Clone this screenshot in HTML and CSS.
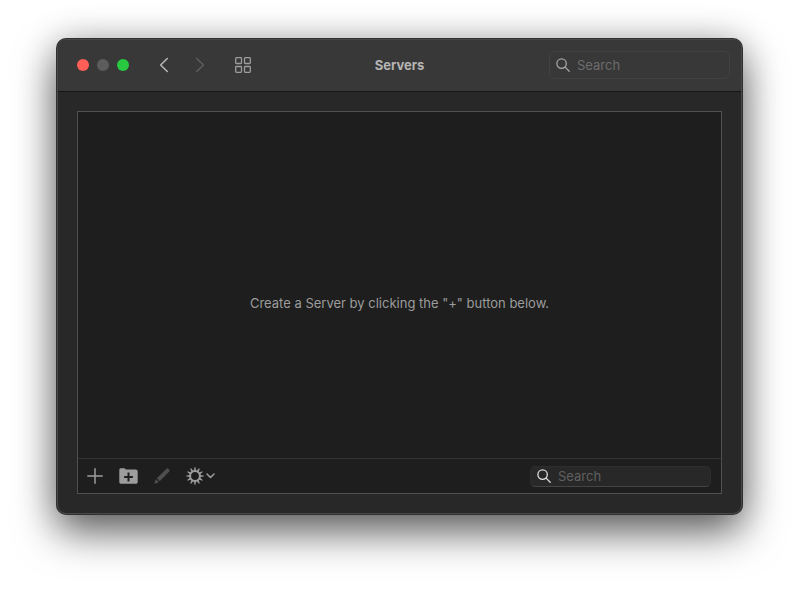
FILE: index.html
```
<!DOCTYPE html>
<html lang="en">
<head>
  <meta charset="UTF-8" />
  <meta name="viewport" content="width=device-width, initial-scale=1.0" />
  <title>Servers</title>
  <link rel="stylesheet" href="styles.css">
</head>
<body>
  <div class="window">
    <header class="titlebar">
      <div class="titlebar-left">
        <div class="lights">
          <button class="light light-close" aria-label="Close"></button>
          <button class="light light-minimize" aria-label="Minimize" disabled></button>
          <button class="light light-zoom" aria-label="Zoom"></button>
        </div>
        <div class="nav">
          <button class="icon-btn nav-btn" aria-label="Back">
            <svg width="10" height="16" viewBox="0 0 10 16"><path d="M8.3 1.5 1.6 8l6.7 6.5" /></svg>
          </button>
          <button class="icon-btn nav-btn" aria-label="Forward" disabled>
            <svg width="10" height="16" viewBox="0 0 10 16"><path d="M1.7 1.5 8.4 8l-6.7 6.5" /></svg>
          </button>
        </div>
        <button class="icon-btn grid-btn" aria-label="Show all">
          <svg width="16" height="16" viewBox="0 0 16 16">
            <rect x="0.7" y="0.7" width="5.8" height="5.8" rx="0.8" />
            <rect x="9.5" y="0.7" width="5.8" height="5.8" rx="0.8" />
            <rect x="0.7" y="9.5" width="5.8" height="5.8" rx="0.8" />
            <rect x="9.5" y="9.5" width="5.8" height="5.8" rx="0.8" />
          </svg>
        </button>
      </div>
      <h1 class="title">Servers</h1>
      <label class="search search-top">
        <svg width="14" height="14" viewBox="0 0 14 14"><circle cx="5.6" cy="5.6" r="4.7" /><path d="m9.1 9.1 4.1 4.1" /></svg>
        <input type="search" placeholder="Search" aria-label="Search preferences" />
      </label>
    </header>

    <main class="content">
      <section class="panel">
        <div class="empty">Create a Server by clicking the "+" button below.</div>

        <footer class="toolbar">
          <div class="actions">
            <button class="icon-btn" aria-label="Add server">
              <svg width="16" height="16" viewBox="0 0 16 16"><path d="M8 .8v14.4M.8 8h14.4" /></svg>
            </button>
            <button class="icon-btn" aria-label="Add folder">
              <svg width="19" height="16" viewBox="0 0 19 16">
                <path class="fill" d="M.3 2.2C.3.9.9.3 2.1.3h2.6c.9 0 1.3.3 1.7.8l.4.5h9.8c1.4 0 2.1.7 2.1 2.1v10c0 1.4-.7 2.1-2.1 2.1H2.4C1 15.8.3 15.1.3 13.7z" />
                <path class="cut" d="M9.5 4.6v8.8M5.1 9h8.8" />
              </svg>
            </button>
            <button class="icon-btn" aria-label="Edit" disabled>
              <svg width="16" height="16" viewBox="0 0 16 16">
                <path class="fill" d="M12.6.7c.6-.6 1.2-.6 1.7 0l1 1c.6.5.6 1.1 0 1.7L5.7 13.2 2.8 10.3zM2 11.2l2.8 2.8-3 1.5c-.9.4-1.6-.3-1.3-1.2z" />
              </svg>
            </button>
            <button class="icon-btn menu-btn" aria-label="More actions">
              <svg width="18" height="18" viewBox="0 0 18 18">
                <circle class="gear" cx="9" cy="9" r="4.9" />
                <g class="teeth">
                  <path id="tooth" d="M8.5.3h1l.6 4.2H7.9z" />
                  <use href="#tooth" transform="rotate(30 9 9)" />
                  <use href="#tooth" transform="rotate(60 9 9)" />
                  <use href="#tooth" transform="rotate(90 9 9)" />
                  <use href="#tooth" transform="rotate(120 9 9)" />
                  <use href="#tooth" transform="rotate(150 9 9)" />
                  <use href="#tooth" transform="rotate(180 9 9)" />
                  <use href="#tooth" transform="rotate(210 9 9)" />
                  <use href="#tooth" transform="rotate(240 9 9)" />
                  <use href="#tooth" transform="rotate(270 9 9)" />
                  <use href="#tooth" transform="rotate(300 9 9)" />
                  <use href="#tooth" transform="rotate(330 9 9)" />
                </g>
              </svg>
              <svg width="9" height="6" viewBox="0 0 9 6"><path d="m1 1 3.5 3.5L8 1" /></svg>
            </button>
          </div>
          <label class="search search-bottom">
            <svg width="14" height="14" viewBox="0 0 14 14"><circle cx="5.6" cy="5.6" r="4.7" /><path d="m9.1 9.1 4.1 4.1" /></svg>
            <input type="search" placeholder="Search" aria-label="Search servers" />
          </label>
        </footer>
      </section>
    </main>
  </div>
</body>
</html>
```
FILE: styles.css
```
* {
  box-sizing: border-box;
}
body {
  margin: 0;
  min-height: 100vh;
  padding: 39px 57px 75px;
  display: flex;
  background: white;
  font-family: Inter, "Liberation Sans", sans-serif;
  font-size: 13px;
  line-height: 16px;
}
.window {
  flex: 1;
  display: flex;
  flex-direction: column;
  border: 1px solid #484848;
  border-radius: 9px;
  background: #282828;
  overflow: hidden;
  box-shadow: 0 0 0 1px #303030, 0 18px 42px rgba(0, 0, 0, 0.6), 0 0 36px rgba(0, 0, 0, 0.2);
}

/* title bar */
.titlebar {
  display: grid;
  grid-template-columns: 1fr auto 1fr;
  align-items: center;
  height: 52px;
  padding: 0 11px 2px;
  background: #383838;
  border-bottom: 1px solid #161616;
}
.titlebar-left,
.lights,
.nav,
.actions,
.menu-btn {
  display: flex;
  align-items: center;
}
.lights {
  gap: 8px;
  margin-left: 8px;
}
.light {
  width: 12px;
  height: 12px;
  padding: 0;
  border: 0;
  border-radius: 50%;
}
.light-close {
  background: #ff5f57;
}
.light-minimize {
  background: #5c5c5c;
}
.light-zoom {
  background: #28c840;
}
.nav {
  gap: 26px;
  margin-left: 30px;
}
.grid-btn {
  margin-left: 30px;
}
.title {
  margin: 0;
  font-size: 13px;
  font-weight: 700;
  color: #b4b4b4;
}

/* icons */
.icon-btn {
  padding: 0;
  border: 0;
  background: none;
  color: #9d9d9d;
}
.icon-btn:disabled {
  color: #4e4e4e;
}
.nav-btn {
  color: #b8b8b8;
}
.nav-btn:disabled {
  color: #5e5e5e;
}
svg {
  display: block;
  flex: none;
  fill: none;
  stroke: currentColor;
  stroke-width: 1.5;
  stroke-linecap: round;
  stroke-linejoin: round;
}
.grid-btn svg {
  stroke-width: 1.3;
}
.fill,
.teeth {
  fill: currentColor;
  stroke: none;
}
.cut {
  stroke: #1e1e1e;
  stroke-width: 2;
  stroke-linecap: butt;
}
.gear {
  stroke-width: 2;
}

/* search fields */
.search {
  display: flex;
  align-items: center;
  justify-self: end;
  gap: 7px;
  width: 181px;
  padding: 0 6px;
  border: 1px solid #424242;
  border-radius: 6px;
}
.search svg {
  stroke-width: 1.3;
}
.search input {
  flex: 1;
  min-width: 0;
  padding: 0;
  border: 0;
  outline: 0;
  background: none;
  color: #dddddd;
  font: inherit;
}
.search input::placeholder {
  color: #6c6c6c;
}
.search-top {
  height: 28px;
  color: #a4a4a4;
}
.search-bottom {
  height: 21px;
  background: #282828;
  border-color: #2d2d2d;
  border-bottom-color: #454545;
  border-radius: 5px;
  color: #dcdcdc;
}
.search-bottom input::placeholder {
  color: #606060;
}

/* server list */
.content {
  flex: 1;
  display: flex;
  padding: 19px;
}
.panel {
  flex: 1;
  display: flex;
  flex-direction: column;
  border: 1px solid #505050;
  background: #1e1e1e;
}
.empty {
  flex: 1;
  display: flex;
  align-items: center;
  justify-content: center;
  padding-top: 36px;
  color: #9c9c9c;
}
.toolbar {
  display: flex;
  align-items: center;
  justify-content: space-between;
  height: 35px;
  padding: 0 10px 0 9px;
  border-top: 1px solid #333333;
}
.actions {
  gap: 16px;
}
.menu-btn {
  gap: 2px;
}
```
